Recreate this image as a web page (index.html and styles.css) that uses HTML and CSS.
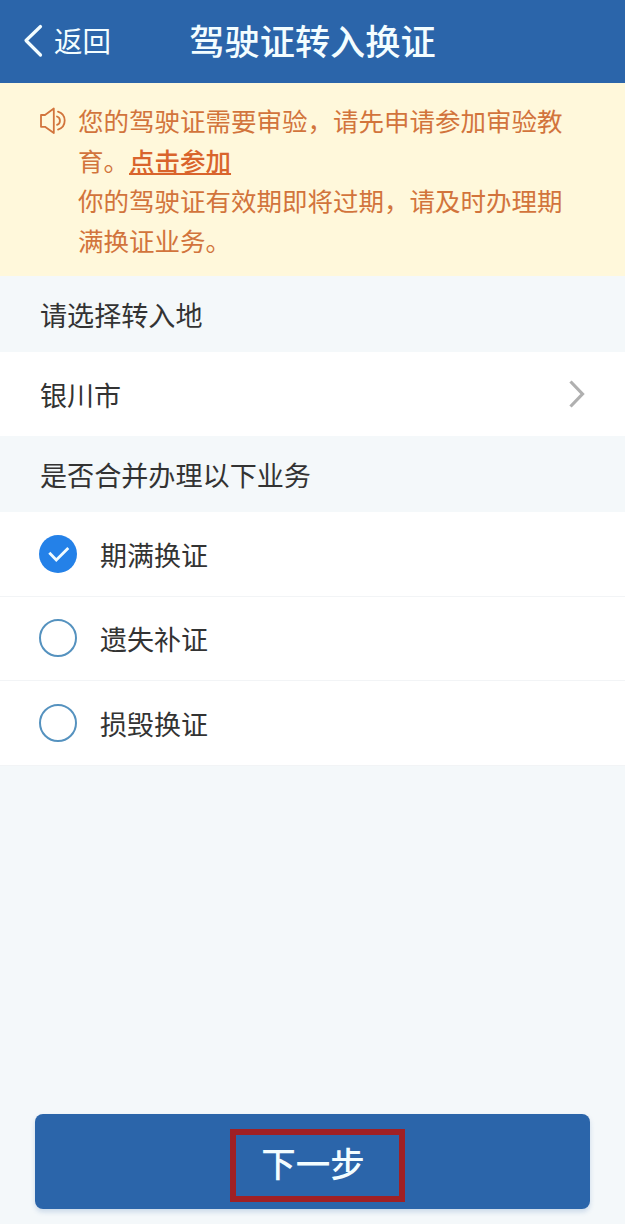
FILE: index.html
```
<!DOCTYPE html>
<html lang="zh-CN">
<head>
  <meta charset="UTF-8">
  <meta name="viewport" content="width=device-width, initial-scale=1.0">
  <title>驾驶证转入换证</title>
  <link rel="stylesheet" href="styles.css">
</head>
<body>

  <!-- Header -->
  <header class="header">
    <a href="#" class="back">
      <svg class="back-icon" viewBox="0 0 20 34" width="20" height="34">
        <path d="M17.5 2.5 L3 16.5 L17.5 31" fill="none" stroke="currentColor" stroke-width="3.2" stroke-linecap="round" stroke-linejoin="round"/>
      </svg>
      <span class="back-text">返回</span>
    </a>
    <h1>驾驶证转入换证</h1>
  </header>

  <!-- Notice -->
  <section class="notice">
    <svg class="notice-icon" viewBox="0 0 28 28" width="28" height="28">
      <g fill="none" stroke="currentColor" stroke-width="1.8" stroke-linejoin="round" stroke-linecap="round">
        <path d="M2 8 H6 L14.8 1.5 V26 L6 19.8 H2 Z"/>
        <path d="M18 9.5 A4.4 4.4 0 0 1 18 17.8"/>
        <path d="M19 4.6 A9.4 9.4 0 0 1 19 22.6"/>
      </g>
    </svg>
    <div class="notice-text">
      <p>您的驾驶证需要审验，请先申请参加审验教<br>育。<a href="#">点击参加</a></p>
      <p>你的驾驶证有效期即将过期，请及时办理期<br>满换证业务。</p>
    </div>
  </section>

  <!-- City -->
  <h2 class="label">请选择转入地</h2>
  <div class="city">
    <span>银川市</span>
    <svg viewBox="0 0 18 30" width="18" height="30">
      <path d="M2.5 2.5 L14.5 15 L2.5 27.5" fill="none" stroke="#b0b0b0" stroke-width="3.2"/>
    </svg>
  </div>

  <!-- Options -->
  <h2 class="label">是否合并办理以下业务</h2>
  <ul class="options">
    <li>
      <span class="radio checked">
        <svg viewBox="0 0 38 38" width="38" height="38">
          <path d="M10.3 17.8 L17.3 25 L29.3 13" fill="none" stroke="#f0fbff" stroke-width="2.8"/>
        </svg>
      </span>
      <span class="option-text">期满换证</span>
    </li>
    <li><span class="radio"></span><span class="option-text">遗失补证</span></li>
    <li><span class="radio"></span><span class="option-text">损毁换证</span></li>
  </ul>

  <!-- Submit -->
  <footer class="footer">
    <button class="btn"><span class="btn-text">下一步</span></button>
  </footer>

</body>
</html>
```
FILE: styles.css
```
* {
  box-sizing: border-box;
}

body {
  font-family: 'Noto Sans CJK SC', sans-serif;
  margin: 0;
  min-height: 1224px;
  background-color: #f4f8fa;
  color: #333;
  font-size: 27px;
  display: flex;
  flex-direction: column;
}

h1, h2, p, ul {
  margin: 0;
  padding: 0;
}

/* Header */
.header {
  height: 83px;
  background-color: #2b65aa;
  color: #f3fdff;
  display: grid;
  grid-template-columns: 1fr auto 1fr;
  align-items: center;
}

.back {
  display: flex;
  align-items: center;
  gap: 11px;
  padding-left: 23px;
  color: inherit;
  text-decoration: none;
  font-size: 28.5px;
  line-height: 40px;
}

.back-icon {
  margin-bottom: 2px;
}

.back-text {
  padding-bottom: 4px;
}

.header h1 {
  padding-bottom: 4px;
  font-size: 35.2px;
  font-weight: 500;
  line-height: 50px;
}

/* Notice */
.notice {
  height: 193px;
  padding: 17px 40px 0 39px;
  background-color: #fff8db;
  color: #d2743c;
  display: flex;
  gap: 11px;
}

.notice-icon {
  flex: none;
  margin-top: 7px;
}

.notice-text {
  font-size: 25.5px;
  line-height: 40px;
  white-space: nowrap;
}

.notice-text a {
  color: #d9642c;
  font-weight: 500;
  text-decoration: underline;
}

/* City and section labels */
.label {
  height: 76px;
  padding: 0 40px;
  font-size: 27.1px;
  font-weight: 400;
  line-height: 78px;
}

.city {
  height: 84px;
  padding: 0 39px 0 40px;
  background-color: #fff;
  display: flex;
  align-items: center;
  justify-content: space-between;
}

/* Options */
.options {
  list-style: none;
  background-color: #fff;
}

.options li {
  height: 84.5px;
  padding: 0 39px;
  display: flex;
  align-items: center;
  gap: 23px;
  border-bottom: 1px solid #f2f4f6;
}

.option-text {
  padding-top: 1px;
}

.radio {
  width: 38px;
  height: 38px;
  border: 2px solid #5592bf;
  border-radius: 50%;
}

.radio.checked {
  border: none;
  background-color: #2481e8;
}

.radio svg {
  display: block;
}

/* Submit */
.footer {
  margin-top: auto;
  padding: 0 35px 15px;
}

.btn {
  width: 100%;
  height: 95px;
  padding: 7px 0 0 10px;
  border: none;
  border-radius: 8px;
  background-color: #2b65aa;
  box-shadow: 0 3px 5px rgba(43, 101, 170, 0.2);
  color: #f3fdff;
  font-family: inherit;
  font-size: 34.5px;
  font-weight: 500;
  display: flex;
  align-items: center;
  justify-content: center;
}

.btn-text {
  width: 175px;
  height: 73px;
  padding-right: 9px;
  border: 6px solid #a02024;
  line-height: 54px;
}
```
